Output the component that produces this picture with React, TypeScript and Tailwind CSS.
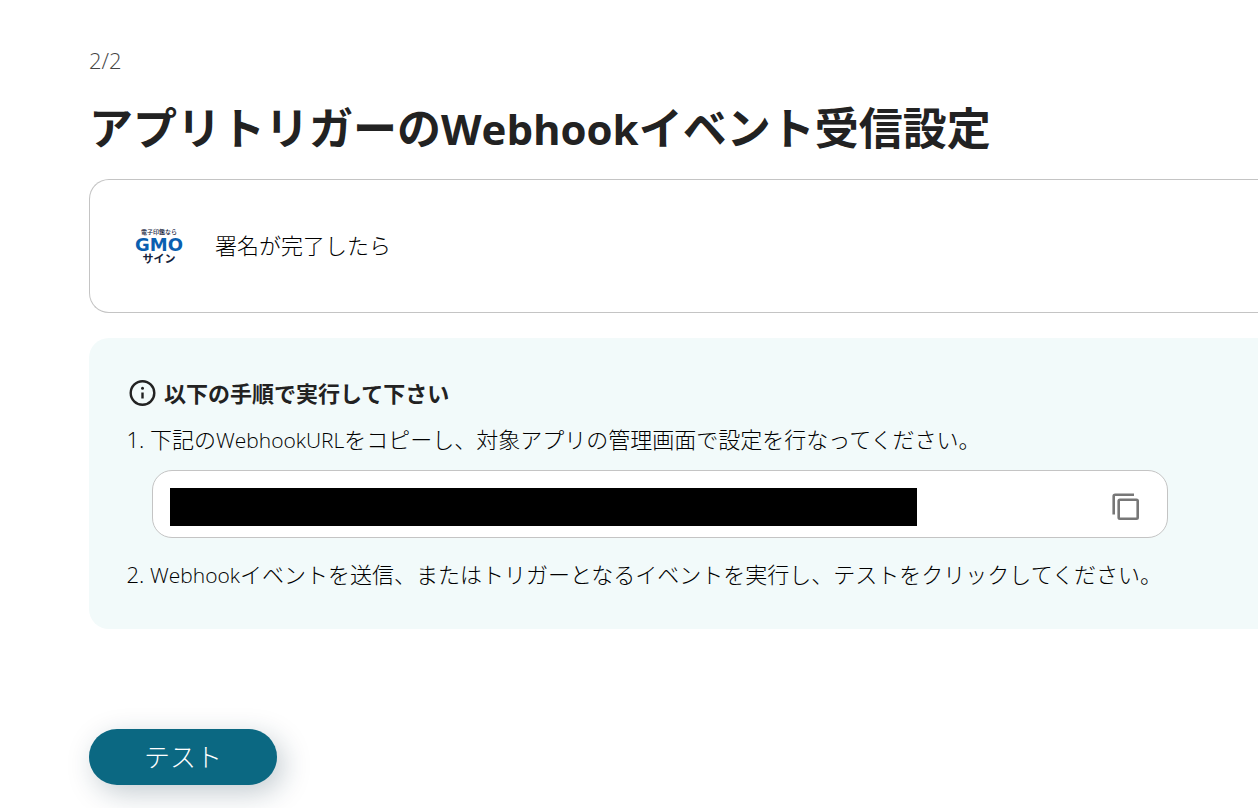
function GmoSignLogo() {
  return (
    <svg className="h-10 w-14 shrink-0" viewBox="0 0 56 40" role="img" aria-label="電子印鑑なら GMOサイン">
      <g textAnchor="middle" fontFamily="'Noto Sans CJK JP', sans-serif" fontWeight="700" fill="#14213a">
        <text x="28" y="9" fontSize="6" fontWeight="500">
          電子印鑑なら
        </text>
        <text x="28" y="26" fontSize="18" fontFamily="'DejaVu Sans', sans-serif" fill="#0a5fb0">
          GMO
        </text>
        <text x="28" y="38" fontSize="11">
          サイン
        </text>
      </g>
    </svg>
  );
}

function InfoIcon() {
  return (
    <svg className="size-7 shrink-0" viewBox="0 0 28 28" fill="none" stroke="currentColor" aria-hidden="true">
      <circle cx="14.5" cy="14" r="11.8" strokeWidth="2.4" />
      <path d="M14.5 13.5v6" strokeWidth="2.4" />
      <circle cx="14.5" cy="9.2" r="1.5" fill="currentColor" stroke="none" />
    </svg>
  );
}

function CopyIcon() {
  return (
    <svg className="size-7" viewBox="0 0 28 28" fill="none" stroke="currentColor" strokeWidth="2.6" aria-hidden="true">
      <path d="M1.7 21.5V3.2a1.5 1.5 0 0 1 1.5-1.5H22" />
      <rect x="6.7" y="6.7" width="19" height="19" rx="1.2" />
    </svg>
  );
}

export default function App() {
  return (
    <main className="pt-[42px] pb-6 pl-[89px] font-['Open_Sans','Noto_Sans_CJK_JP',sans-serif] text-[22px] leading-9 text-[#222]">
      <p className="font-light text-[#444]">2/2</p>
      <h1 className="mt-[18px] text-[44px] leading-[64px] font-bold">
        アプリトリガーの<span className="text-[42px]">Webhook</span>イベント受信設定
      </h1>

      <section className="mt-[18px] flex h-[134px] items-center gap-7 rounded-l-[20px] border border-r-0 border-[#c4c4c4] pb-0.5 pl-[41px]">
        <GmoSignLogo />
        <p className="font-light text-black">署名が完了したら</p>
      </section>

      <section className="mt-[25px] rounded-l-[20px] bg-[#f2fafa] pt-[37px] pr-[90px] pb-9 pl-[39px]">
        <h2 className="flex items-center gap-2 font-bold">
          <InfoIcon />
          以下の手順で実行して下さい
        </h2>
        <ol className="mt-2.5 list-decimal pl-[22px] font-light text-black">
          <li>
            下記の<span className="text-[21px]">WebhookURL</span>をコピーし、対象アプリの管理画面で設定を行なってください。
            <div className="mt-3 mb-[18px] ml-0.5 flex h-[68px] items-center justify-between rounded-[20px] border border-[#c4c4c4] bg-white pt-1.5 pr-[27px] pl-[17px]">
              <input className="h-[38px] w-[747px] bg-black text-black" aria-label="WebhookURL" readOnly />
              <button className="text-[#777]" type="button" aria-label="コピー">
                <CopyIcon />
              </button>
            </div>
          </li>
          <li>
            <span className="text-[21px]">Webhook</span>
            イベントを送信、またはトリガーとなるイベントを実行し、テストをクリックしてください。
          </li>
        </ol>
      </section>

      <button
        className="mt-[100px] flex h-14 w-[188px] justify-center rounded-full bg-[#0b6882] pt-2.5 text-[26px] font-light text-white shadow-[6px_8px_28px_rgba(20,50,70,0.25)]"
        type="button"
      >
        テスト
      </button>
    </main>
  );
}
